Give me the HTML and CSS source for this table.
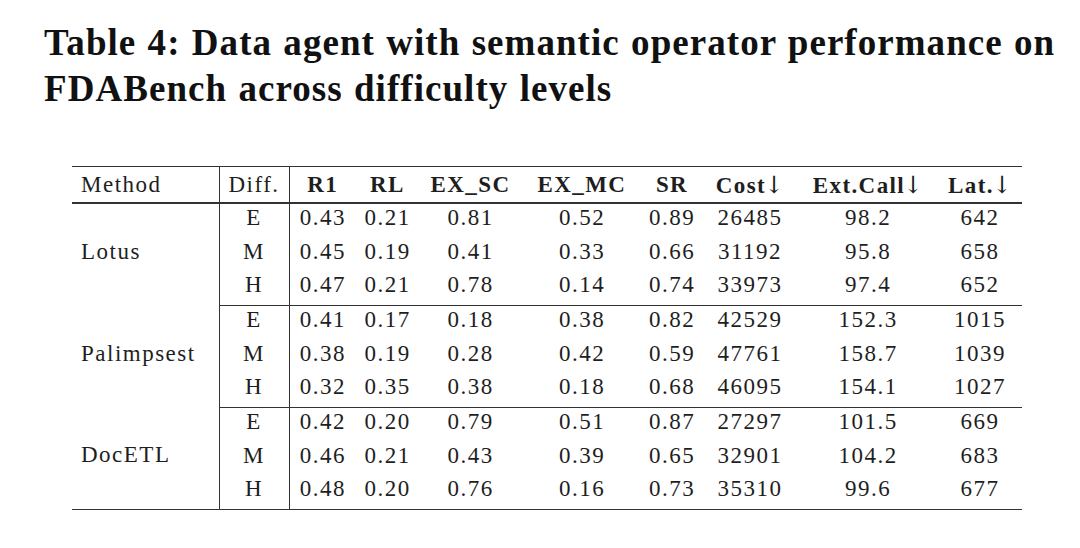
FILE: index.html
```html
<!DOCTYPE html>
<html>
<head>
<meta charset="utf-8">
<link rel="stylesheet" href="styles.css">
</head>
<body>
<div class="page">
  <h1 class="caption">Table 4: Data agent with semantic operator performance on FDABench across difficulty levels</h1>
  <table class="results">
    <colgroup>
      <col class="c-method"><col class="c-diff"><col class="c-r1"><col class="c-rl"><col class="c-exsc"><col class="c-exmc"><col class="c-sr"><col class="c-cost"><col class="c-ext"><col class="c-lat">
    </colgroup>
    <thead>
      <tr>
        <th class="method vr">Method</th>
        <th class="diff vr">Diff.</th>
        <th class="b">R1</th>
        <th class="b">RL</th>
        <th class="b">EX_SC</th>
        <th class="b">EX_MC</th>
        <th class="b">SR</th>
        <th class="b">Cost<span class="arr">↓</span></th>
        <th class="b">Ext.Call<span class="arr">↓</span></th>
        <th class="b">Lat.<span class="arr">↓</span></th>
      </tr>
    </thead>
    <tbody>
      <tr><td class="method vr" rowspan="3">Lotus</td><td class="vr">E</td><td>0.43</td><td>0.21</td><td>0.81</td><td>0.52</td><td>0.89</td><td>26485</td><td>98.2</td><td>642</td></tr>
      <tr><td class="vr">M</td><td>0.45</td><td>0.19</td><td>0.41</td><td>0.33</td><td>0.66</td><td>31192</td><td>95.8</td><td>658</td></tr>
      <tr class="last"><td class="vr">H</td><td>0.47</td><td>0.21</td><td>0.78</td><td>0.14</td><td>0.74</td><td>33973</td><td>97.4</td><td>652</td></tr>
    </tbody>
    <tbody>
      <tr><td class="method vr" rowspan="3">Palimpsest</td><td class="vr">E</td><td>0.41</td><td>0.17</td><td>0.18</td><td>0.38</td><td>0.82</td><td>42529</td><td>152.3</td><td>1015</td></tr>
      <tr><td class="vr">M</td><td>0.38</td><td>0.19</td><td>0.28</td><td>0.42</td><td>0.59</td><td>47761</td><td>158.7</td><td>1039</td></tr>
      <tr class="last"><td class="vr">H</td><td>0.32</td><td>0.35</td><td>0.38</td><td>0.18</td><td>0.68</td><td>46095</td><td>154.1</td><td>1027</td></tr>
    </tbody>
    <tbody>
      <tr><td class="method vr" rowspan="3">DocETL</td><td class="vr">E</td><td>0.42</td><td>0.20</td><td>0.79</td><td>0.51</td><td>0.87</td><td>27297</td><td>101.5</td><td>669</td></tr>
      <tr><td class="vr">M</td><td>0.46</td><td>0.21</td><td>0.43</td><td>0.39</td><td>0.65</td><td>32901</td><td>104.2</td><td>683</td></tr>
      <tr class="last"><td class="vr">H</td><td>0.48</td><td>0.20</td><td>0.76</td><td>0.16</td><td>0.73</td><td>35310</td><td>99.6</td><td>677</td></tr>
    </tbody>
  </table>
</div>
</body>
</html>
```
FILE: styles.css
```css
html, body {
  margin: 0;
  padding: 0;
  background: #ffffff;
}
.page {
  padding: 20px 0 0 44px;
  font-family: "Liberation Serif", "Times New Roman", serif;
  color: #1e1e1e;
}
.caption {
  margin: 0;
  font-size: 37px;
  line-height: 46px;
  font-weight: bold;
  letter-spacing: 1.05px;
  word-spacing: 1px;
  color: #111;
  width: 1030px;
}
.results {
  margin: 54px 0 0 28px;
  border-collapse: collapse;
  table-layout: fixed;
  width: 950px;
  font-size: 23px;
  letter-spacing: 1.5px;
  border-top: 1.5px solid #333;
  border-bottom: 1.5px solid #333;
}
.c-method { width: 147px; }
.c-diff { width: 70px; }
.c-r1 { width: 67px; }
.c-rl { width: 63px; }
.c-exsc { width: 103px; }
.c-exmc { width: 120px; }
.c-sr { width: 60px; }
.c-cost { width: 96px; }
.c-ext { width: 140px; }
.c-lat { width: 84px; }
.results th, .results td {
  padding: 0;
  text-align: center;
  font-weight: normal;
  white-space: nowrap;
}
.results thead th {
  height: 35px;
  border-bottom: 2.5px solid #333;
}
.results th.b {
  font-weight: bold;
  letter-spacing: 1.4px;
}
.results th .arr {
  font-weight: normal;
  font-family: "DejaVu Serif", serif;
  font-size: 24px;
  color: #1e1e1e;
  letter-spacing: 0;
  margin-left: -2px;
}
.results td {
  height: 27.7px;
  padding-bottom: 6px;
  line-height: 26px;
}
.results tbody tr.last td {
  border-bottom: 1.5px solid #333;
}
.results .vr {
  border-right: 1.5px solid #333;
}
.results .method {
  text-align: left;
  padding-left: 9px;
}
```
